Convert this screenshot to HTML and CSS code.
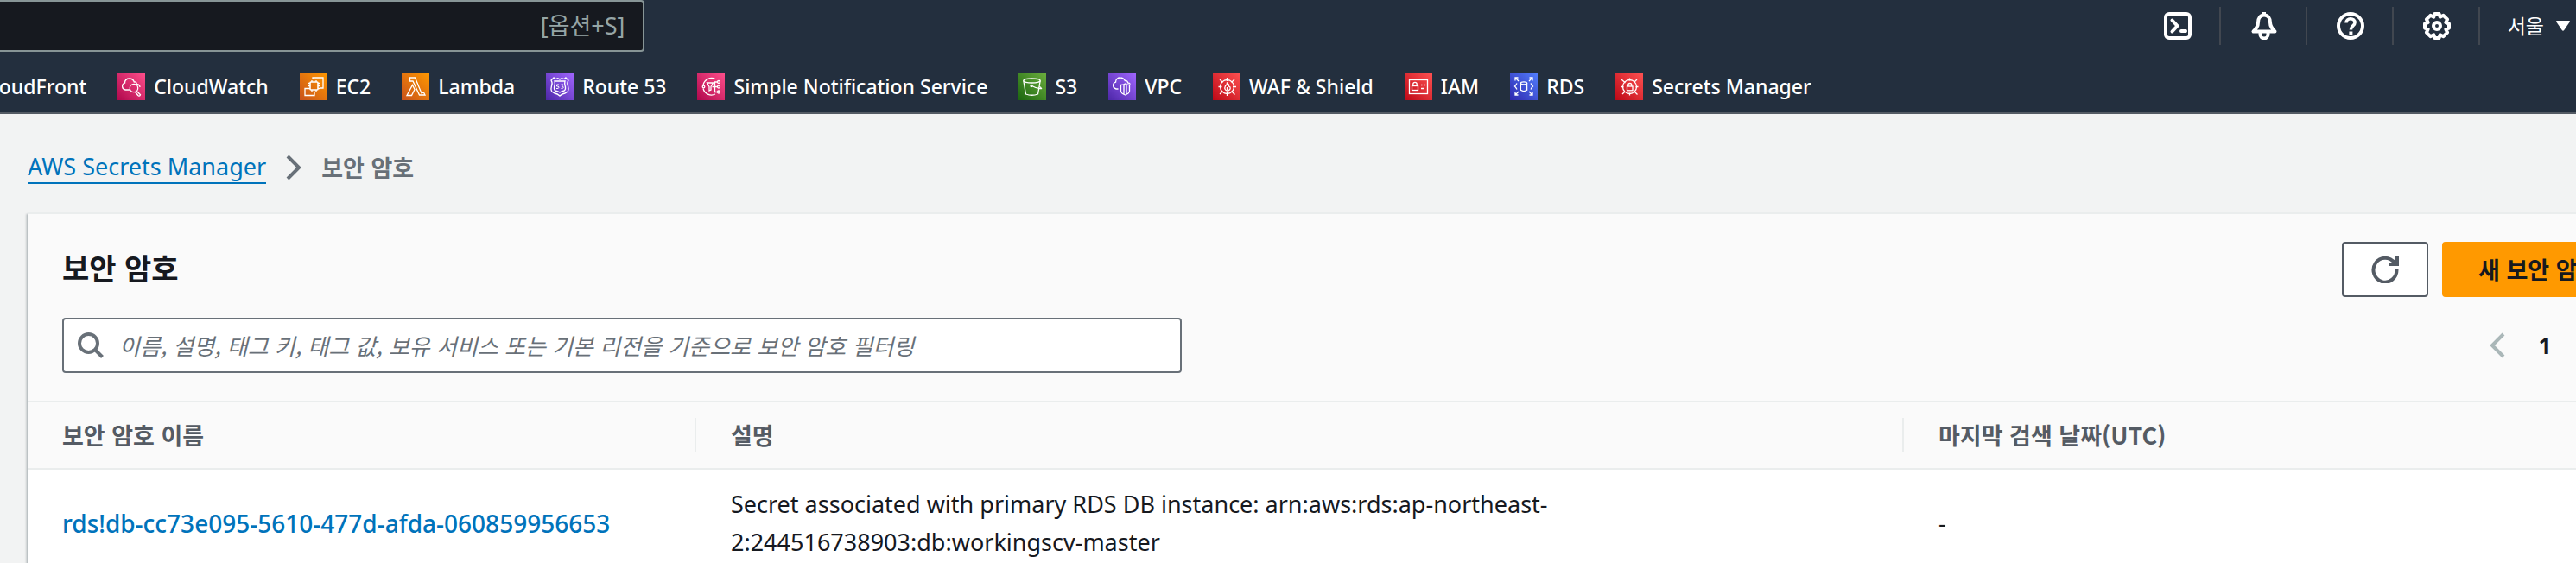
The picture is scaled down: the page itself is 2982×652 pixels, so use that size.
FILE: index.html
```html
<!DOCTYPE html>
<html lang="ko">
<head>
<meta charset="utf-8">
<title>AWS Secrets Manager</title>
<link rel="stylesheet" href="styles.css">
</head>
<body>
<svg class="defs" aria-hidden="true">
  <defs>
    <linearGradient id="g-pink" x1="0" y1="1" x2="1" y2="0"><stop offset="0" stop-color="#b0084d"/><stop offset="1" stop-color="#ff4f8b"/></linearGradient>
    <linearGradient id="g-orange" x1="0" y1="1" x2="1" y2="0"><stop offset="0" stop-color="#c8511b"/><stop offset="1" stop-color="#ff9900"/></linearGradient>
    <linearGradient id="g-purple" x1="0" y1="1" x2="1" y2="0"><stop offset="0" stop-color="#4d27a8"/><stop offset="1" stop-color="#a166ff"/></linearGradient>
    <linearGradient id="g-green" x1="0" y1="1" x2="1" y2="0"><stop offset="0" stop-color="#1b660f"/><stop offset="1" stop-color="#6cae3e"/></linearGradient>
    <linearGradient id="g-red" x1="0" y1="1" x2="1" y2="0"><stop offset="0" stop-color="#bd0816"/><stop offset="1" stop-color="#ff5252"/></linearGradient>
    <linearGradient id="g-blue" x1="0" y1="1" x2="1" y2="0"><stop offset="0" stop-color="#2e27ad"/><stop offset="1" stop-color="#527fff"/></linearGradient>
  </defs>
</svg>

<header class="header">
  <div class="topbar">
    <label class="global-search">
      <input class="global-input" type="search" aria-label="검색">
      <span class="hint">[옵션+S]</span>
    </label>
    <nav class="tools" aria-label="도구">
      <button class="tool" type="button" aria-label="CloudShell">
        <svg class="tool-icon" viewBox="0 0 32 32"><rect x="2" y="2" width="28" height="28" rx="4"/><path d="M9.500 9.500 15.500 16l-6 6.500" stroke-linecap="round"/><path d="M20 22h5" stroke-linecap="round"/></svg>
      </button>
      <button class="tool" type="button" aria-label="알림">
        <svg class="tool-icon" viewBox="0 0 32 32"><path d="M16 3.500c-4.500 0-7 3.500-7 8.500 0 5-2.500 7.500-5.500 10.500h25C25.500 19.500 23 17 23 12c0-5-2.500-8.500-7-8.500z" stroke-linejoin="round"/><path d="M16 0v4"/><path d="M11.500 24v2a4.500 4.500 0 0 0 9 0v-2"/></svg>
      </button>
      <button class="tool" type="button" aria-label="지원">
        <svg class="tool-icon" viewBox="0 0 32 32"><circle cx="16" cy="16" r="14"/><path d="M11 12.500c0-3 2.200-4.800 5-4.800s5 1.800 5 4.500c0 3.800-4.600 3.800-4.600 8.300" stroke-width="3.600"/><path d="M16.400 22.500v4"/></svg>
      </button>
      <button class="tool" type="button" aria-label="설정">
        <svg class="tool-icon" viewBox="0 0 32 32"><path stroke-linejoin="round" d="M13.500 2h5l1.200 3.600 3.800-1.800 4.600 4.600-1.800 3.800L30 13.500v5l-3.700 1.300 1.800 3.800-4.600 4.600-3.800-1.800L18.500 30h-5l-1.200-3.600-3.800 1.800-4.600-4.600 1.800-3.800L2 18.500v-5l3.700-1.300-1.800-3.800 4.600-4.600 3.800 1.800z"/><circle cx="16" cy="16" r="4"/></svg>
      </button>
      <button class="region" type="button">서울
        <svg class="caret" viewBox="0 0 16 12"><path d="M1 0h14q1.500 0 .8 1.300L9.200 11q-1.200 1.600-2.400 0L.2 1.300Q-.5 0 1 0z"/></svg>
      </button>
    </nav>
  </div>
  <nav class="favorites" aria-label="즐겨찾기">
    <a class="fav" href="#">CloudFront</a>
    <a class="fav" href="#"><svg class="fav-icon" viewBox="0 0 32 32"><path class="tile" fill="url(#g-pink)" d="M0 0h32v32H0z"/><path d="M14 20H9a4 4 0 0 1-.5-7.800C8.500 8.500 11 7 14 7c2.500 0 4.500 1.500 5.300 4 2-.5 3 1 3 2.500 2.500.5 3.700 2 3.700 3.500"/><circle cx="19" cy="18" r="4.700"/><path d="m22.300 21.500 4.200 4.200c-.6 1.700-2 1.800-2.700.8l-3.300-4"/></svg>CloudWatch</a>
    <a class="fav" href="#"><svg class="fav-icon" viewBox="0 0 32 32"><path class="tile" fill="url(#g-orange)" d="M0 0h32v32H0z"/><rect x="12" y="11" width="9" height="9" rx="1" stroke-width="1.600"/><path d="M14 11V9m2.500 2V9M19 11V9m-5 11v3m2.500-3v3m2.500-3v2m-7-9.500h-2M12 15.500h-2m2 3h-2m11-6h3m-3 3h3m-3 3h2"/><path d="M15 8V6h12v12h-3M9.500 18.500H6V26.500h11v-4"/></svg>EC2</a>
    <a class="fav" href="#"><svg class="fav-icon" viewBox="0 0 32 32"><path class="tile" fill="url(#g-orange)" d="M0 0h32v32H0z"/><path d="M9.500 6h6L23 24l2.500-1L27 26h-6.500L13 10H9.500zM12.500 14.500 15 19.500 11.500 26.500H6z"/></svg>Lambda</a>
    <a class="fav" href="#"><svg class="fav-icon" viewBox="0 0 32 32"><path class="tile" fill="url(#g-purple)" d="M0 0h32v32H0z"/><path d="M9 6q1.500 2 3.500 1Q14 6 16 8q2-2 3.500-1 2 1 3.500-1l3 3q-2 3-.5 6.500 2 7-3.500 8.500-3.500.5-6 3-2.500-2.500-6-3Q4.500 22.500 6.500 15.500 8 12 6 9z"/><path d="M10 10h12q-1 3 .5 7 .5 4-3 4.500-2 .5-3.500 1.500-1.500-1-3.500-1.500-3.500-.5-3-4.500 1.500-4 .5-7z"/><path d="M15 14h-2.500v2q2.500-.5 2.500 1.200T12 18.500M17.500 14h2.500l-1.500 2q1.700 0 1.700 1.300T17.500 18.500" stroke-width="1"/></svg>Route 53</a>
    <a class="fav" href="#"><svg class="fav-icon" viewBox="0 0 32 32"><path class="tile" fill="url(#g-pink)" d="M0 0h32v32H0z"/><path d="M21 7.500A10 10 0 0 0 7 14.500M7 18.500a10 10 0 0 0 14 6.500M11.500 12h7L16 16.500V20l-2 1v-4.500z"/><circle cx="7.500" cy="16.500" r="1.300"/><path d="M17.500 16.500h6M23.500 11h-3v11.500h3"/><circle cx="25" cy="11" r="1.500"/><circle cx="25" cy="16.500" r="1.500"/><circle cx="25" cy="22.500" r="1.500"/></svg>Simple Notification Service</a>
    <a class="fav" href="#"><svg class="fav-icon" viewBox="0 0 32 32"><path class="tile" fill="url(#g-green)" d="M0 0h32v32H0z"/><ellipse cx="15.500" cy="9.500" rx="9.700" ry="2.500"/><path d="M5.800 9.500 8.500 25q7 2.500 14 0l2.700-15.500M15.500 15.500q6 3.500 11 3-.5-1.500-3-2.500"/><circle cx="15" cy="15.500" r="1"/></svg>S3</a>
    <a class="fav" href="#"><svg class="fav-icon" viewBox="0 0 32 32"><path class="tile" fill="url(#g-purple)" d="M0 0h32v32H0z"/><path d="M11.500 19H9a4 4 0 0 1-.5-7.800C8.500 7.500 11 5.800 14 6c2.500 0 4.300 1.500 5.300 3.500 2-.3 3.200.8 3.200 2.300q2 .2 3 1.700"/><path d="M14.500 14.500q3 0 5-1.500 2 1.500 5 1.500v7q-.5 3-5 4.500-4.500-1.500-5-4.500zM18 14v11M21 14v11"/></svg>VPC</a>
    <a class="fav" href="#"><svg class="fav-icon" viewBox="0 0 32 32"><path class="tile" fill="url(#g-red)" d="M0 0h32v32H0z"/><circle cx="16.500" cy="16.500" r="8"/><path d="M16.500 6v4M16.500 23v4M6.500 16.500h4M23 16.500h4M8 8l3.500 3.500M25 8l-3.500 3.500M8 25l3.500-3.500M25.500 25.500l-4-4"/><path d="M16.500 12q-.3 3-2 3.500-2 4.500 2 5.500 4.500-.5 3.500-4l-1.500-1q.3-2.500-2-4zM16.500 17v3"/></svg>WAF &amp; Shield</a>
    <a class="fav" href="#"><svg class="fav-icon" viewBox="0 0 32 32"><path class="tile" fill="url(#g-red)" d="M0 0h32v32H0z"/><rect x="5.500" y="8.500" width="21" height="16"/><rect x="8.500" y="15.500" width="7" height="5"/><path d="M9.800 15.500v-2a2.200 2.200 0 0 1 4.400 0v2M19 14.500h1.500M22 14.500h2M19 18.500h3"/></svg>IAM</a>
    <a class="fav" href="#"><svg class="fav-icon" viewBox="0 0 32 32"><path class="tile" fill="url(#g-blue)" d="M0 0h32v32H0z"/><path d="M10 10 6 6m0 3.500V6h3.500M22 10l4-4m-3.500 0H26v3.500M10 22l-4 4m0-3.500V26h3.500M22 22l4 4m0-3.500V26h-3.500M8 12.500q-1 2-2.500 3.500Q7 17.500 8 19.500M24 12.500q1 2 2.500 3.500-1.500 1.500-2.500 3.500"/><ellipse cx="16" cy="12.300" rx="3.600" ry="1.500"/><path d="M12.400 12.300v8q3.600 2.500 7.200 0v-8"/></svg>RDS</a>
    <a class="fav" href="#"><svg class="fav-icon" viewBox="0 0 32 32"><path class="tile" fill="url(#g-red)" d="M0 0h32v32H0z"/><circle cx="16.500" cy="16.500" r="8"/><path d="M16.500 6.500v3M16.500 23.500v3M6.500 16.500h3M23.500 16.500h3M7 8l4.500 4M25 8l-3 3M8 25l3-3M25.500 25.500l-4-4"/><rect x="13.500" y="16" width="6.500" height="4.800"/><path d="M14.800 16v-1.500a2 2 0 0 1 4 0V16"/></svg>Secrets Manager</a>
  </nav>
</header>

<main class="main">
  <nav class="breadcrumb" aria-label="경로">
    <a class="crumb-link" href="#">AWS Secrets Manager</a>
    <svg class="chevron" viewBox="0 0 20 30"><path d="M3 2l13 13L3 28"/></svg>
    <span class="crumb-current">보안 암호</span>
  </nav>

  <section class="panel">
    <div class="panel-head">
      <div class="row">
        <h1 class="title">보안 암호</h1>
        <div class="actions">
          <button class="btn" type="button" aria-label="새로 고침">
            <svg class="refresh" viewBox="0 0 32 32"><path d="M29.500 16A13.500 14 0 1 1 27 8.500M30 0v10H20"/></svg>
          </button>
          <button class="btn primary" type="button">새 보안 암호 저장</button>
        </div>
      </div>
      <div class="row">
        <label class="filter">
          <svg class="magnifier" viewBox="0 0 30 30"><circle cx="12.500" cy="12.500" r="10.500"/><path d="m20 20 8.500 8.500"/></svg>
          <input class="filter-input" type="text" aria-label="보안 암호 필터링" placeholder="이름, 설명, 태그 키, 태그 값, 보유 서비스 또는 기본 리전을 기준으로 보안 암호 필터링">
        </label>
        <div class="pager">
          <button class="prev" type="button" aria-label="이전 페이지" disabled><svg class="chevron" viewBox="0 0 20 30"><path d="M17 2 4 15l13 13"/></svg></button>
          <span class="page">1</span>
        </div>
      </div>
    </div>
    <table class="secrets">
      <colgroup><col class="col-name"><col class="col-desc"><col></colgroup>
      <thead>
        <tr><th><div class="th">보안 암호 이름</div></th><th><div class="th">설명</div></th><th><div class="th">마지막 검색 날짜(UTC)</div></th></tr>
      </thead>
      <tbody>
        <tr>
          <td><a class="secret-link" href="#">rds!db-cc73e095-5610-477d-afda-060859956653</a></td>
          <td>Secret associated with primary RDS DB instance: arn:aws:rds:ap-northeast-<br>2:244516738903:db:workingscv-master</td>
          <td>-</td>
        </tr>
      </tbody>
    </table>
  </section>
</main>
</body>
</html>
```
FILE: styles.css
```css
* { box-sizing: border-box; }

body {
  margin: 0;
  min-height: 100vh;
  display: flex;
  flex-direction: column;
  overflow: hidden;
  background: #f2f3f3;
  color: #16191f;
  font: 27px/44px "Noto Sans", "Noto Sans CJK KR", sans-serif;
}

button, input { font: inherit; color: inherit; }
button { margin: 0; border: 0; background: none; cursor: pointer; }
svg { flex: none; fill: none; }
.defs { position: absolute; width: 0; height: 0; }

/* Header */
.header {
  background: #232f3e;
  border-bottom: 2px solid #545b64;
  color: #fff;
}

.topbar {
  display: flex;
  justify-content: space-between;
  align-items: flex-start;
}

.global-search {
  display: flex;
  align-items: center;
  width: 25%;
  height: 60px;
  padding-right: 20px;
  border: 2px solid #879596;
  border-left: 0;
  border-radius: 0 4px 4px 0;
  background: #16191f;
}

.global-input {
  flex: 1;
  min-width: 0;
  border: 0;
  outline: 0;
  background: transparent;
}

.hint { color: #95a5a6; }

.tools {
  display: flex;
  align-items: center;
  height: 60px;
}

.tool {
  display: flex;
  align-items: center;
  justify-content: center;
  width: 100px;
  height: 44px;
  padding: 0 0 0 2px;
  border-right: 2px solid #414750;
}

.tool-icon {
  width: 32px;
  height: 32px;
  stroke: #fff;
  stroke-width: 4;
}

.region {
  display: flex;
  align-items: center;
  gap: 14px;
  padding: 0 7px 0 32px;
  font-size: 23px;
}

.caret { width: 16px; height: 12px; fill: #fff; }

.favorites {
  display: flex;
  gap: 36px;
  height: 70px;
  padding-top: 10px;
  margin-left: -22px;
  align-items: center;
  overflow: hidden;
  white-space: nowrap;
}

.fav {
  display: flex;
  align-items: center;
  gap: 10px;
  color: #fff;
  font-size: 23px;
  font-weight: 500;
  text-decoration: none;
}

.fav-icon {
  width: 32px;
  height: 32px;
  stroke: #fff;
  stroke-width: 1.3;
}

.tile { stroke: none; }

/* Page */
.main {
  flex: 1;
  display: flex;
  flex-direction: column;
  padding-left: 32px;
}

.breadcrumb {
  display: flex;
  align-items: center;
  gap: 22px;
  height: 114px;
  padding-top: 10px;
  color: #687078;
}

.crumb-link {
  border-bottom: 2px solid #0073bb;
  color: #0073bb;
  line-height: 36px;
  text-decoration: none;
}

.crumb-current, .title, .filter-input, .primary, .th {
  font-family: "Noto Sans CJK KR", "Noto Sans", sans-serif;
}

.crumb-current { font-weight: 700; }

.chevron {
  display: block;
  width: 20px;
  height: 30px;
  stroke: currentColor;
  stroke-width: 4;
}

.panel {
  flex: 1;
  overflow: hidden;
  border-top: 2px solid #eaeded;
  background: #fff;
  box-shadow: 0 2px 2px rgba(0, 28, 36, 0.3), -2px 2px 2px rgba(0, 28, 36, 0.15);
}

.panel-head {
  display: flex;
  flex-direction: column;
  gap: 24px;
  padding: 32px 0 32px 40px;
  border-bottom: 2px solid #eaeded;
  background: #fafafa;
}

.row {
  display: flex;
  align-items: center;
  justify-content: space-between;
}

.title {
  margin: 0;
  padding-bottom: 4px;
  font-size: 34px;
  font-weight: 700;
}

/* The primary action runs on past the panel's right edge */
.actions {
  display: flex;
  gap: 16px;
  flex: none;
  width: 271px;
}

.btn {
  display: flex;
  flex: none;
  align-items: center;
  justify-content: center;
  height: 64px;
  width: 100px;
  padding: 0;
  border: 2px solid #545b64;
  border-radius: 4px;
  background: #fff;
  font-weight: 700;
  white-space: nowrap;
}

.primary {
  width: auto;
  padding: 0 40px;
  border-color: #f90;
  background: #f90;
}

.row { min-width: 0; }

.refresh {
  width: 32px;
  height: 32px;
  stroke: #545b64;
  stroke-width: 4;
}

.filter {
  display: flex;
  align-items: center;
  gap: 18px;
  flex: 0 1 1296px;
  height: 64px;
  padding: 0 16px;
  border: 2px solid #687078;
  border-radius: 4px;
  background: #fff;
}

.magnifier {
  width: 30px;
  height: 30px;
  stroke: #687078;
  stroke-width: 4;
}

.filter-input {
  flex: 1;
  min-width: 0;
  padding: 0;
  border: 0;
  outline: 0;
  background: transparent;
  font-size: 26px;
}

.filter-input::placeholder {
  color: #687078;
  font-style: italic;
  opacity: 1;
}

.pager {
  display: flex;
  align-items: center;
  gap: 38px;
  padding-right: 28px;
  font-weight: 700;
}

.prev { padding: 0; color: #aab7b8; }

.secrets {
  width: 100%;
  border-collapse: collapse;
  table-layout: fixed;
}

.col-name { width: 774px; }
.col-desc { width: 1398px; }

.secrets th {
  padding: 18px 0;
  border-bottom: 2px solid #eaeded;
  background: #fafafa;
  color: #545b64;
  text-align: left;
}

.th {
  padding-left: 40px;
  border-right: 2px solid #eaeded;
  line-height: 40px;
}

.secrets th:last-child .th { border-right: 0; }

.secrets td {
  padding: 18px 0 20px 40px;
  vertical-align: middle;
}

.secret-link {
  color: #0073bb;
  font-size: 28px;
  font-weight: 500;
  text-decoration: none;
}
```
